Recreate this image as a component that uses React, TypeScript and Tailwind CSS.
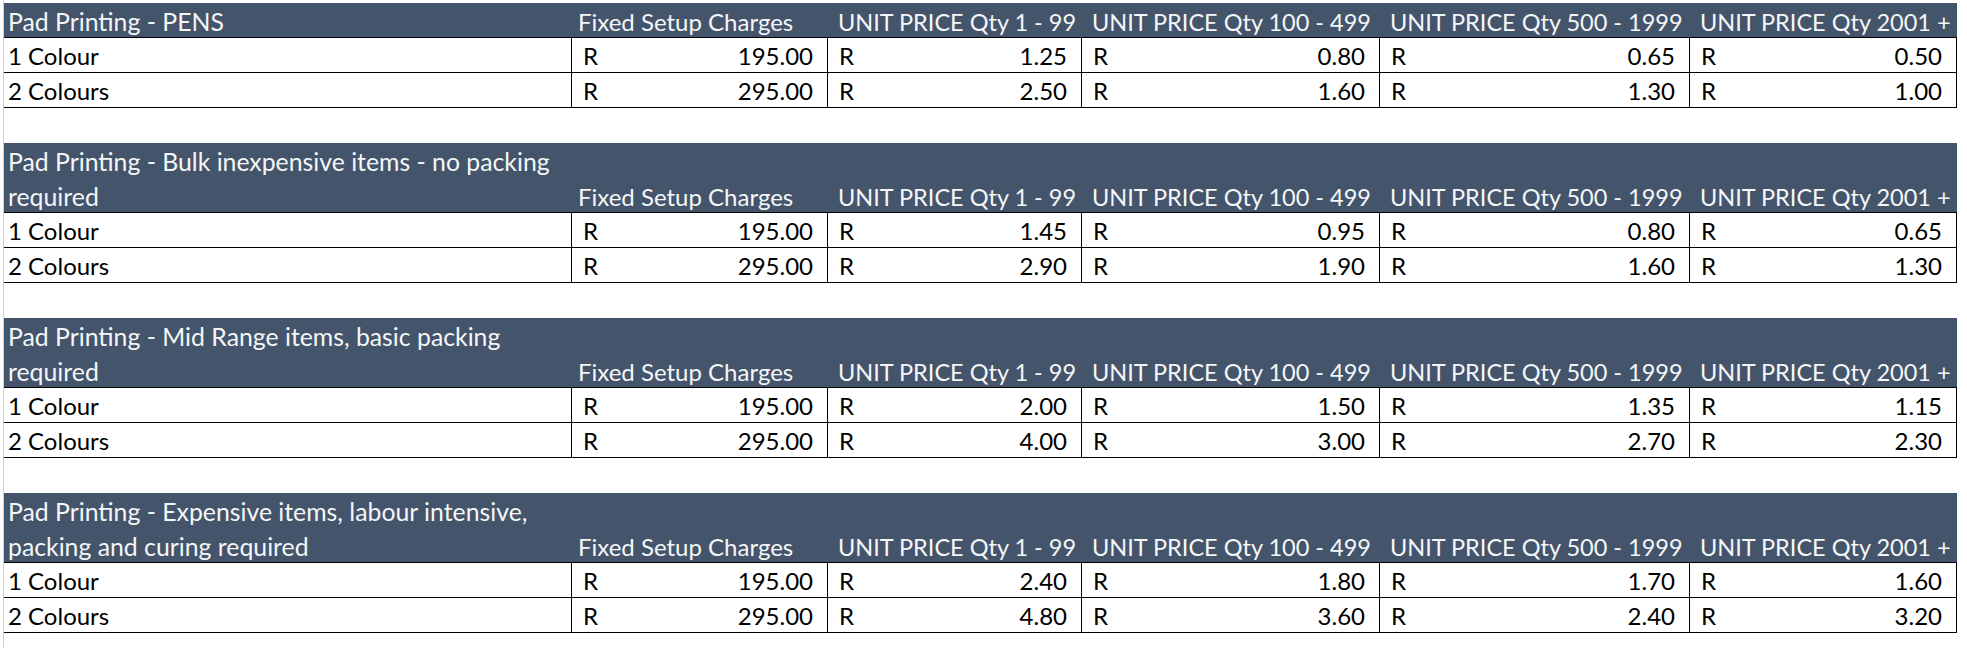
import React from "react";

type Section = {
  title: string[];
  rows: { label: string; values: string[] }[];
};

const sections: Section[] = [
  {
    title: ["Pad Printing - PENS"],
    rows: [
      { label: "1 Colour", values: ["195.00", "1.25", "0.80", "0.65", "0.50"] },
      { label: "2 Colours", values: ["295.00", "2.50", "1.60", "1.30", "1.00"] },
    ],
  },
  {
    title: ["Pad Printing - Bulk inexpensive items - no packing", "required"],
    rows: [
      { label: "1 Colour", values: ["195.00", "1.45", "0.95", "0.80", "0.65"] },
      { label: "2 Colours", values: ["295.00", "2.90", "1.90", "1.60", "1.30"] },
    ],
  },
  {
    title: ["Pad Printing - Mid Range items, basic packing", "required"],
    rows: [
      { label: "1 Colour", values: ["195.00", "2.00", "1.50", "1.35", "1.15"] },
      { label: "2 Colours", values: ["295.00", "4.00", "3.00", "2.70", "2.30"] },
    ],
  },
  {
    title: ["Pad Printing - Expensive items, labour intensive,", "packing and curing required"],
    rows: [
      { label: "1 Colour", values: ["195.00", "2.40", "1.80", "1.70", "1.60"] },
      { label: "2 Colours", values: ["295.00", "4.80", "3.60", "2.40", "3.20"] },
    ],
  },
];

const headers = [
  "Fixed Setup Charges",
  "UNIT PRICE Qty 1 - 99",
  "UNIT PRICE Qty 100 - 499",
  "UNIT PRICE Qty 500 - 1999",
  "UNIT PRICE Qty 2001 +",
];

const gridCols = "grid grid-cols-[567px_256px_254px_298px_310px_268px]";

function Header({ title }: { title: string[] }) {
  const tall = title.length > 1;
  return (
    <div
      className={`${gridCols} bg-[#44546a] text-[#f4f6f8] border-b border-black ${
        tall ? "h-[70px]" : "h-[35px]"
      }`}
    >
      <div className="flex flex-col justify-end pl-[4px] text-[24.8px]">
        {title.map((t, i) => (
          <div key={i} className="h-[35px] flex items-end pb-[2px] leading-[28px] whitespace-nowrap">
            {t}
          </div>
        ))}
      </div>
      {headers.map((h, i) => (
        <div
          key={i}
          className={`flex items-end pb-[2px] leading-[28px] whitespace-nowrap ${
            i === 0 ? "pl-[7px] text-[24px]" : "pl-[11px] text-[23.5px]"
          }`}
        >
          {h}
        </div>
      ))}
    </div>
  );
}

function DataRow({ label, values }: { label: string; values: string[] }) {
  return (
    <div className={`${gridCols} h-[35px] border-b border-black text-black text-[24px]`}>
      <div className="flex items-end pb-[2px] pl-[4px] leading-[28px]">{label}</div>
      {values.map((v, i) => (
        <div
          key={i}
          className={`flex items-end justify-between pb-[2px] pl-[11px] pr-[14px] leading-[28px] border-l border-black ${
            i === values.length - 1 ? "border-r" : ""
          }`}
        >
          <span>R</span>
          <span>{v}</span>
        </div>
      ))}
    </div>
  );
}

export default function App() {
  return (
    <div
      className="w-[1967px] h-[648px] bg-white flex overflow-hidden"
      style={{ fontFamily: "Lato, 'Liberation Sans', sans-serif" }}
    >
      <div className="w-[4px] shrink-0 border-r border-[#d0d0d0] h-full" />
      <div className="flex flex-col pt-[3px]">
        {sections.map((s, i) => (
          <div key={i} className="flex flex-col">
            <Header title={s.title} />
            {s.rows.map((r, j) => (
              <DataRow key={j} label={r.label} values={r.values} />
            ))}
            <div className="h-[35px]" />
          </div>
        ))}
      </div>
    </div>
  );
}
